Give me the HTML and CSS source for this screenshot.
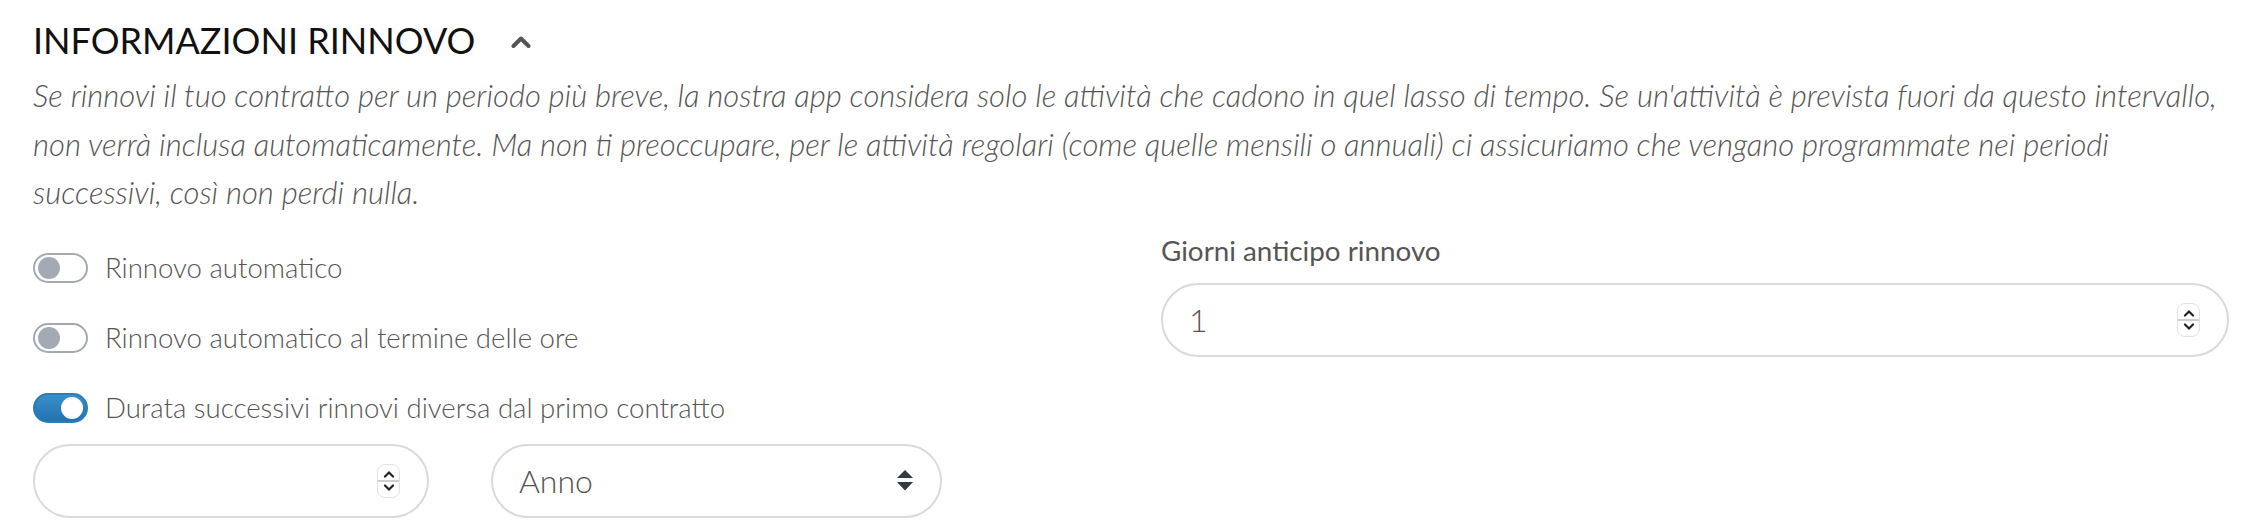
FILE: index.html
```html
<!DOCTYPE html>
<html>
  <head>
    <title>Informazioni rinnovo</title>
    <link rel="stylesheet" href="styles.css">
  </head>

  <body>
    <section class="renewal">
      <header class="renewal-head">
        <h2>INFORMAZIONI RINNOVO</h2>
        <svg class="collapse-icon" width="20" height="13" viewBox="0 0 20 13">
          <path d="M2.5 11 L10 3.5 L17.5 11" fill="none" stroke="#555" stroke-width="4" stroke-linecap="round" stroke-linejoin="round" />
        </svg>
      </header>

      <p class="renewal-note">
        Se rinnovi il tuo contratto per un periodo più breve, la nostra app considera solo le attività che cadono in quel lasso di tempo. Se un'attività è prevista fuori da questo intervallo, non verrà inclusa automaticamente. Ma non ti preoccupare, per le attività regolari (come quelle mensili o annuali) ci assicuriamo che vengano programmate nei periodi successivi, così non perdi nulla.
      </p>

      <div class="renewal-grid">
        <div class="renewal-left">
          <label class="switch-row">
            <span class="switch"></span>
            <span>Rinnovo automatico</span>
          </label>
          <label class="switch-row">
            <span class="switch"></span>
            <span>Rinnovo automatico al termine delle ore</span>
          </label>
          <label class="switch-row">
            <span class="switch switch-on"></span>
            <span>Durata successivi rinnovi diversa dal primo contratto</span>
          </label>

          <div class="duration-row">
            <div class="field field-duration">
              <input type="text" value="" />
              <span class="spin">
                <svg width="12" height="8" viewBox="0 0 12 8"><path d="M2 6.5 L6 2.5 L10 6.5" fill="none" stroke="#222" stroke-width="2.2" stroke-linecap="round" /></svg>
                <span class="spin-line"></span>
                <svg width="12" height="8" viewBox="0 0 12 8"><path d="M2 1.5 L6 5.5 L10 1.5" fill="none" stroke="#222" stroke-width="2.2" stroke-linecap="round" /></svg>
              </span>
            </div>
            <div class="field field-unit">
              <select>
                <option>Anno</option>
                <option>Mese</option>
              </select>
              <svg width="16" height="21" viewBox="0 0 16 21">
                <path d="M8 0 L16 8 L0 8 Z M0 12 L16 12 L8 20.5 Z" fill="#343a40" />
              </svg>
            </div>
          </div>
        </div>

        <div class="renewal-right">
          <span class="field-label">Giorni anticipo rinnovo</span>
          <div class="field">
            <input type="text" value="1" />
            <span class="spin">
              <svg width="12" height="8" viewBox="0 0 12 8"><path d="M2 6.5 L6 2.5 L10 6.5" fill="none" stroke="#222" stroke-width="2.2" stroke-linecap="round" /></svg>
              <span class="spin-line"></span>
              <svg width="12" height="8" viewBox="0 0 12 8"><path d="M2 1.5 L6 5.5 L10 1.5" fill="none" stroke="#222" stroke-width="2.2" stroke-linecap="round" /></svg>
            </span>
          </div>
        </div>
      </div>
    </section>
  </body>
</html>
```

FILE: styles.css
```css
body {
  margin: 0;
  font-family: Lato, "Open Sans", sans-serif;
  background: #fff;
  color: #555;
}

.renewal {
  padding: 17px 30px 0 33px;
}

.renewal-head {
  display: flex;
  align-items: center;
  gap: 36px;
}

h2 {
  margin: 0;
  font-size: 36px;
  font-weight: 400;
  color: #111;
  line-height: 46px;
}

.collapse-icon {
  margin-top: 2px;
}

.renewal-note {
  margin: 8px -10px 0 0;
  font-size: 31px;
  line-height: 48.5px;
  font-style: italic;
  font-weight: 300;
  color: #555;
}

.renewal-grid {
  display: grid;
  grid-template-columns: 1fr 1fr;
  column-gap: 60px;
  margin-top: 16px;
}

.renewal-left {
  display: flex;
  flex-direction: column;
  gap: 40px;
  padding-top: 20px;
}

.switch-row {
  display: flex;
  align-items: center;
  gap: 17px;
  font-size: 27.6px;
  font-weight: 300;
  line-height: 30px;
  color: #555;
  user-select: none;
}

.switch {
  position: relative;
  width: 51px;
  height: 26px;
  border: 2px solid #a3a9b1;
  border-radius: 15px;
  background: #fff;
  flex-shrink: 0;
}

.switch::after {
  content: "";
  position: absolute;
  left: 3px;
  top: 2px;
  width: 22px;
  height: 22px;
  border-radius: 50%;
  background: #a3aab3;
}

.switch-on {
  border-color: #2a7db8;
  background: linear-gradient(#3a8fc9, #2273b0);
}

.switch-on::after {
  left: auto;
  right: 3px;
  background: #fff;
}

.duration-row {
  display: flex;
  gap: 62px;
  margin-top: -19px;
}

.field {
  display: flex;
  align-items: center;
  box-sizing: border-box;
  height: 74px;
  border: 2px solid #dadada;
  border-radius: 37px;
  padding: 0 27px 0 26px;
  background: #fff;
}

.field-duration {
  width: 396px;
}

.field-unit {
  width: 451px;
}

.field input,
.field select {
  flex: 1;
  min-width: 0;
  border: none;
  outline: none;
  background: transparent;
  font-family: inherit;
  font-size: 32px;
  font-weight: 300;
  color: #555;
  padding: 0;
  appearance: none;
}

.spin {
  display: flex;
  flex-direction: column;
  align-items: center;
  justify-content: center;
  gap: 2px;
  width: 23px;
  height: 34px;
  box-sizing: border-box;
  border: 1px solid #e2e2e2;
  border-radius: 8px;
  background: #fff;
}

.spin-line {
  width: 100%;
  height: 2px;
  background: #cfcfcf;
}

.renewal-right {
  display: flex;
  flex-direction: column;
  gap: 14px;
}

.field-label {
  font-size: 27.8px;
  font-weight: 400;
  color: #555;
  line-height: 36px;
}
```
